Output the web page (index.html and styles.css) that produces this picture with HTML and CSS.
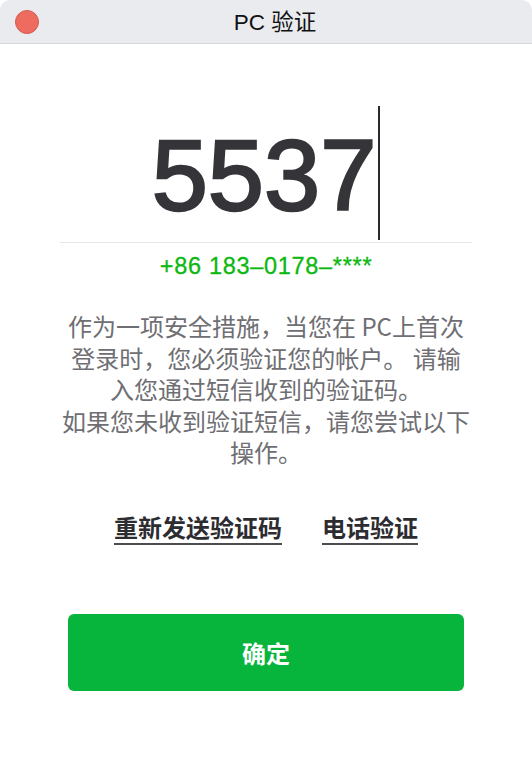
FILE: index.html
```html
<!DOCTYPE html>
<html lang="zh-CN">
<head>
<meta charset="utf-8">
<title>PC 验证</title>
<link rel="stylesheet" href="styles.css">
</head>
<body>
<div class="window">
  <header class="titlebar">
    <span class="close-dot"></span>
    <h1 class="title">PC 验证</h1>
  </header>
  <main class="content">
    <div class="code-row">
      <span class="digits">5537</span><span class="cursor"></span>
    </div>
    <p class="phone">+86 183–0178–****</p>
    <p class="desc">作为一项安全措施，当您在 PC上首次登录时，您必须验证您的帐户。 请输入您通过短信收到的验证码。<br>如果您未收到验证短信，请您尝试以下操作。</p>
    <div class="links">
      <a class="link">重新发送验证码</a>
      <a class="link">电话验证</a>
    </div>
    <button class="confirm">确定</button>
  </main>
</div>
</body>
</html>
```
FILE: styles.css
```css
* { box-sizing: border-box; }
html, body {
  margin: 0;
  padding: 0;
  background: #ffffff;
}
body {
  width: 532px;
  height: 770px;
  overflow: hidden;
  font-family: "Liberation Sans", "Noto Sans CJK SC", sans-serif;
}
.window {
  width: 532px;
  height: 770px;
  background: #ffffff;
}
.titlebar {
  position: relative;
  height: 44px;
  background: #e9ebef;
  border-bottom: 1px solid #d5d7db;
  border-radius: 10px 10px 0 0;
  display: flex;
  align-items: center;
  justify-content: center;
}
.close-dot {
  position: absolute;
  left: 15px;
  top: 10px;
  width: 24px;
  height: 24px;
  border-radius: 50%;
  background: #ee6b60;
  border: 1px solid #d65a50;
}
.title {
  margin: 0;
  font-size: 22.5px;
  font-weight: normal;
  color: #111;
  line-height: 24px;
  padding-left: 18px;
  padding-top: 3px;
  font-family: "Liberation Sans", "Noto Sans CJK SC", sans-serif;
}
.content {
  display: flex;
  flex-direction: column;
  align-items: center;
}
.code-row {
  margin-top: 62px;
  width: 412px;
  height: 137px;
  border-bottom: 1px solid #e4e6e9;
  display: flex;
  justify-content: center;
  align-items: flex-end;
}
.digits {
  font-family: "Liberation Sans", sans-serif;
  font-size: 101px;
  line-height: 102px;
  color: #353539;
  -webkit-text-stroke: 2.4px #353539;
  padding-bottom: 16px;
  letter-spacing: 0;
}
.cursor {
  width: 2px;
  height: 134px;
  background: #2a2a2e;
  margin-left: 2px;
  margin-bottom: 2px;
}
.phone {
  margin: 11px 0 0;
  font-size: 23.5px;
  line-height: 24px;
  letter-spacing: 0.7px;
  color: #0bb80f;
  -webkit-text-stroke: 0.3px #0bb80f;
  font-family: "Liberation Sans", sans-serif;
}
.desc {
  margin: 32px 0 0;
  width: 410px;
  text-align: center;
  font-size: 24px;
  line-height: 31.5px;
  color: #6e6e73;
  font-family: "Noto Sans CJK SC", sans-serif;
}
.links {
  margin-top: 45px;
  display: flex;
  gap: 40px;
  justify-content: center;
}
.link {
  font-family: "Noto Sans CJK SC", sans-serif;
  font-size: 24px;
  font-weight: bold;
  line-height: 28px;
  color: #2c2c31;
  padding-bottom: 2px;
  border-bottom: 2px solid #4b4b50;
  cursor: pointer;
}
.confirm {
  margin-top: 69px;
  width: 396px;
  height: 77px;
  border: none;
  border-radius: 6px;
  background: #08b53c;
  color: #ffffff;
  font-family: "Noto Sans CJK SC", sans-serif;
  font-size: 24px;
  font-weight: bold;
}
```
